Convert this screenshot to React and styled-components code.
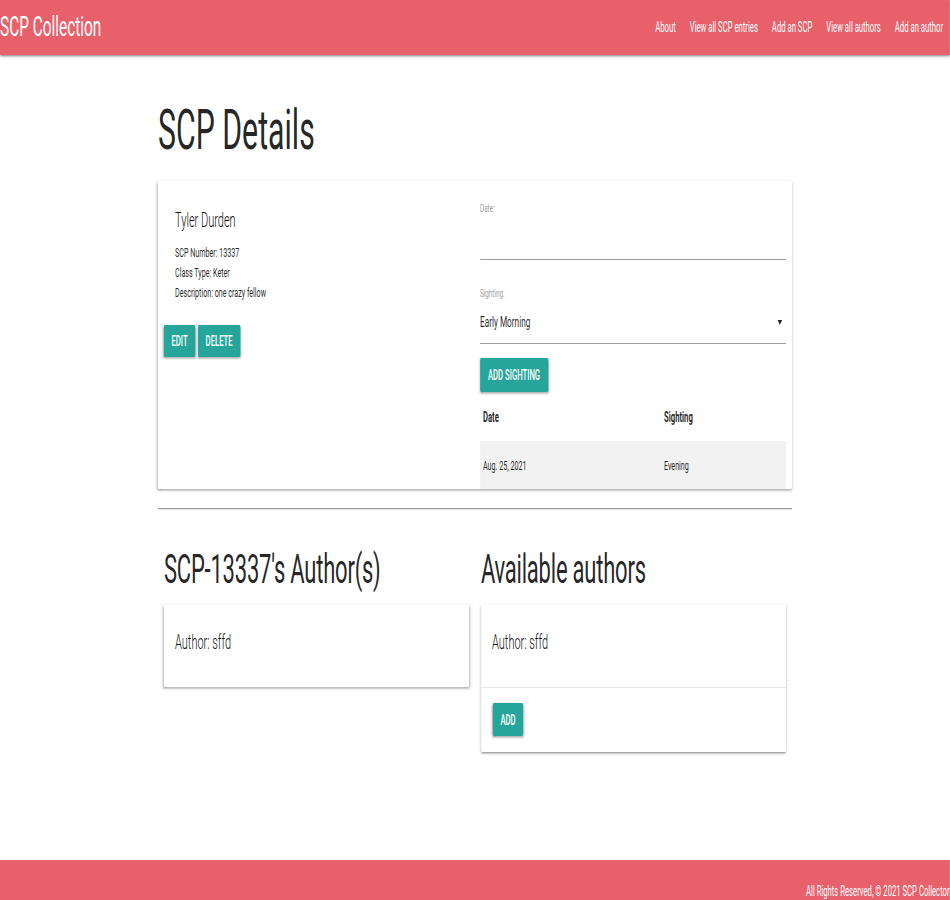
import styled, { createGlobalStyle } from "styled-components";

// the whole page is drawn narrow: every horizontal size is given in
// on-screen pixels and widened by 1/S, then the page is squeezed by S
const S = 0.55;
const w = (v) => `${(v / S).toFixed(2)}px`;

const coral = "#e8606a";
const teal = "#26a69a";
const shadow =
  "0 2px 2px 0 rgba(0,0,0,0.14), 0 3px 1px -2px rgba(0,0,0,0.12), 0 1px 5px 0 rgba(0,0,0,0.2)";

const GlobalStyle = createGlobalStyle`
  html, body {
    margin: 0;
    padding: 0;
    overflow: hidden;
    background: #fff;
  }
`;

const Page = styled.div`
  width: ${w(950)};
  height: 900px;
  transform: scaleX(${S});
  transform-origin: 0 0;
  display: flex;
  flex-direction: column;
  font-family: Roboto, "Liberation Sans", sans-serif;
  color: rgba(0, 0, 0, 0.87);
`;

const Nav = styled.nav`
  height: 55px;
  flex-shrink: 0;
  background: ${coral};
  box-shadow: ${shadow};
  display: flex;
  align-items: center;
  justify-content: space-between;
  position: relative;
  z-index: 1;
`;

const Brand = styled.a`
  color: #fff;
  font-size: 28px;
  line-height: 55px;
  text-decoration: none;
  padding-bottom: 3px;
`;

const NavLinks = styled.ul`
  display: flex;
  list-style: none;
  margin: 0;
  padding: 0;
`;

const NavLink = styled.a`
  display: block;
  color: #fff;
  font-size: 14px;
  line-height: 55px;
  padding: 0 ${w(7)};
  text-decoration: none;
  white-space: nowrap;
`;

const Main = styled.main`
  flex: 1;
`;

const Container = styled.div`
  width: ${w(634)};
  margin: 0 auto;
`;

const Title = styled.h2`
  margin: 42px 0 18px;
  font-size: 55px;
  line-height: 66px;
  font-weight: 400;
`;

const Card = styled.div`
  background: #fff;
  box-shadow: ${shadow};
  border-radius: 2px;
`;

const DetailCard = styled(Card)`
  display: grid;
  grid-template-columns: 1fr 1fr;
  height: 308px;
`;

const InfoCol = styled.div`
  padding: 25px 0 0 ${w(6)};
`;

const InfoText = styled.div`
  padding-left: ${w(11)};
`;

const Name = styled.div`
  font-size: 20px;
  font-weight: 300;
  line-height: 28px;
  margin-bottom: 9px;
  color: #111;
`;

const InfoLine = styled.div`
  font-size: 13px;
  line-height: 20px;
`;

const ButtonRow = styled.div`
  display: flex;
  gap: ${w(3)};
  margin-top: 22px;
`;

const Button = styled.button`
  height: ${(p) => p.$h || 32}px;
  padding: 0 ${(p) => w(p.$px || 7.5)};
  background: ${teal};
  color: #fff;
  border: none;
  border-radius: 2px;
  box-shadow: ${shadow};
  font-family: inherit;
  font-size: 14px;
  font-weight: 500;
  text-transform: uppercase;
  cursor: pointer;
`;

const FormCol = styled.div`
  padding: 20px ${w(6)} 0 ${w(5)};
  display: flex;
  flex-direction: column;
  align-items: flex-start;
`;

const Label = styled.div`
  font-size: 11.5px;
  line-height: 15px;
  color: #9e9e9e;
`;

const Field = styled.div`
  align-self: stretch;
  height: ${(p) => p.$h}px;
  border-bottom: 1px solid #9e9e9e;
  margin-bottom: ${(p) => p.$mb || 0}px;
  display: flex;
  align-items: center;
  justify-content: space-between;
  font-size: 15px;
  line-height: 20px;
`;

const Caret = styled.span`
  width: 0;
  height: 0;
  margin-right: ${w(4)};
  border-left: ${w(2.5)} solid transparent;
  border-right: ${w(2.5)} solid transparent;
  border-top: 5px solid rgba(0, 0, 0, 0.87);
`;

const Gap = styled.div`
  height: ${(p) => p.$h}px;
`;

const Table = styled.table`
  width: 100%;
  border-collapse: collapse;
  font-size: 13px;
`;

const Th = styled.th`
  text-align: left;
  font-size: 14px;
  font-weight: 700;
  height: 49px;
  padding: 0 0 0 ${w(3)};
  width: ${(p) => (p.$first ? w(178) : "auto")};
`;

const Td = styled.td`
  height: 48px;
  padding: 0 0 0 ${w(3)};
  background: #f2f2f2;
`;

const Rule = styled.hr`
  margin: 19px 0 0;
  border: none;
  border-top: 1px solid #9a9a9a;
  border-bottom: 1px solid #e6e6e6;
`;

const AuthorsRow = styled.div`
  display: grid;
  grid-template-columns: 1fr 1fr;
`;

const AuthorCol = styled.div`
  padding: 0 ${w(6)};
`;

const SubTitle = styled.h3`
  margin: 35px 0 11px;
  font-size: 40px;
  line-height: 49px;
  font-weight: 400;
  letter-spacing: -0.4px;
  white-space: nowrap;
`;

const CardBody = styled.div`
  padding: 21px ${w(11)} 29px;
  font-size: 20px;
  font-weight: 300;
  line-height: 32px;
  color: #111;
`;

const CardAction = styled.div`
  border-top: 1px solid rgba(160, 160, 160, 0.25);
  padding: 15px ${w(12)} 16px;
`;

const Footer = styled.footer`
  height: 40px;
  flex-shrink: 0;
  background: ${coral};
  overflow: hidden;
  padding-top: 21px;
  box-sizing: border-box;
`;

const FooterText = styled.div`
  margin-left: ${w(806)};
  color: #fff;
  font-size: 14px;
  line-height: 20px;
  white-space: nowrap;
`;

const links = [
  "About",
  "View all SCP entries",
  "Add an SCP",
  "View all authors",
  "Add an author",
];

export default function App() {
  return (
    <>
      <GlobalStyle />
      <Page>
        <Nav>
          <Brand href="#">SCP Collection</Brand>
          <NavLinks>
            {links.map((l) => (
              <li key={l}>
                <NavLink href="#">{l}</NavLink>
              </li>
            ))}
          </NavLinks>
        </Nav>
        <Main>
          <Container>
            <Title>SCP Details</Title>
            <DetailCard>
              <InfoCol>
                <InfoText>
                  <Name>Tyler Durden</Name>
                  <InfoLine>SCP Number: 13337</InfoLine>
                  <InfoLine>Class Type: Keter</InfoLine>
                  <InfoLine>Description: one crazy fellow</InfoLine>
                </InfoText>
                <ButtonRow>
                  <Button>Edit</Button>
                  <Button>Delete</Button>
                </ButtonRow>
              </InfoCol>
              <FormCol>
                <Label>Date:</Label>
                <Field $h={43} $mb={26} />
                <Label>Sighting:</Label>
                <Field $h={42}>
                  <span>Early Morning</span>
                  <Caret />
                </Field>
                <Gap $h={14} />
                <Button $h={34} $px={8}>
                  Add Sighting
                </Button>
                <Table>
                  <thead>
                    <tr>
                      <Th $first>Date</Th>
                      <Th>Sighting</Th>
                    </tr>
                  </thead>
                  <tbody>
                    <tr>
                      <Td>Aug. 25, 2021</Td>
                      <Td>Evening</Td>
                    </tr>
                  </tbody>
                </Table>
              </FormCol>
            </DetailCard>
            <Rule />
            <AuthorsRow>
              <AuthorCol>
                <SubTitle>SCP-13337's Author(s)</SubTitle>
                <Card>
                  <CardBody>Author: sffd</CardBody>
                </Card>
              </AuthorCol>
              <AuthorCol>
                <SubTitle>Available authors</SubTitle>
                <Card>
                  <CardBody>Author: sffd</CardBody>
                  <CardAction>
                    <Button $h={33}>Add</Button>
                  </CardAction>
                </Card>
              </AuthorCol>
            </AuthorsRow>
          </Container>
        </Main>
        <Footer>
          <FooterText>All Rights Reserved, © 2021 SCP Collector</FooterText>
        </Footer>
      </Page>
    </>
  );
}
